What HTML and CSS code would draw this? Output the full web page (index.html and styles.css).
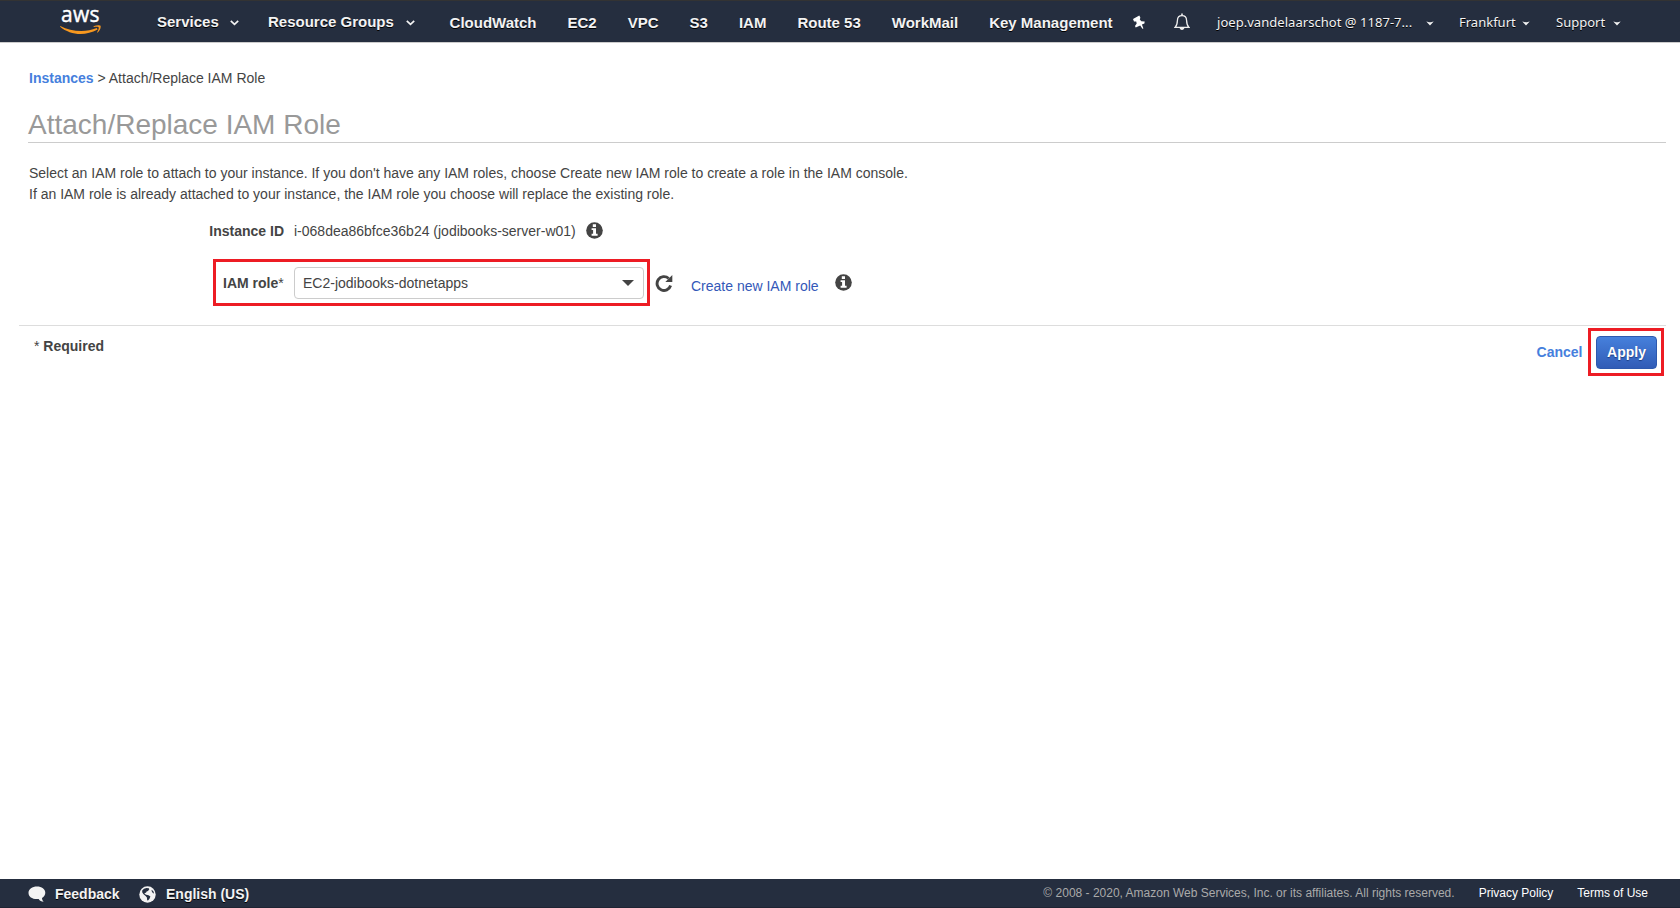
FILE: index.html
```html
<!DOCTYPE html>
<html lang="en">
<head>
<meta charset="utf-8">
<title>Attach/Replace IAM Role</title>
<link rel="stylesheet" href="styles.css">
</head>
<body>
<svg class="defs" width="0" height="0">
  <symbol id="caret" viewBox="0 0 9 6"><path d="M.8.8 4.5 4.4 8.200.8" fill="none" stroke="currentColor" stroke-width="1.700"/></symbol>
  <symbol id="tri" viewBox="0 0 8 5"><path d="M.3.400C2 .4 2.500 1.200 4 1.200S6 .4 7.700.4L4 4.600z" fill="currentColor"/></symbol>
  <symbol id="info" viewBox="0 0 17 17"><circle cx="8.500" cy="8.500" r="8.300" fill="#444"/><path d="M6.800 2.300h3.200v2.700h-3.200zM5.600 6.300h4.400v5.500h1.600v1.900H5.600v-1.900h1.500V8.100H5.600z" fill="#fff"/></symbol>
</svg>
<header class="topbar">
  <a class="logo">
    <span class="logo-text">aws</span>
    <svg class="smile" viewBox="0 0 42 10" width="42" height="10"><path d="M.3.900C11 6.500 25 8 36.800 3L37.600 4.500C25 11.500 10 10 .1 1.700z" fill="#f7981f"/><path d="M33.500 1.300C36 .2 39.800-.1 40.500.8 41.200 2 39.900 5.800 37.700 7.600 37.100 7.900 37 7.500 37.200 7 38 5.200 39.200 3.100 38.600 2.300 38 1.500 35.600 1.800 33.800 2z" fill="#f7981f"/></svg>
  </a>
  <nav class="menus">
    <a class="menu services">Services<svg class="caret"><use href="#caret"/></svg></a>
    <a class="menu groups">Resource Groups<svg class="caret"><use href="#caret"/></svg></a>
  </nav>
  <nav class="shortcuts">
    <a>CloudWatch</a><a>EC2</a><a>VPC</a><a>S3</a><a>IAM</a><a>Route 53</a><a>WorkMail</a><a>Key Management</a>
  </nav>
  <svg class="pin" viewBox="0 0 14 15" width="14" height="15"><path d="M1 4 7.300.4 8.400 2.800 7.800 4.600 9.300 6.200 12.700 6.600 12.400 8.400 9.900 9.600 11.400 13.400 10.400 13.700 8.200 10.600 3.700 12.600 3 11 4.700 8.500 4.200 6.600 2 6.500z" fill="#fff"/></svg>
  <svg class="bell" viewBox="0 0 16 18" width="16" height="18"><path d="M1.200 14.300C3 12.500 3.300 10.500 3.400 7.500 3.500 4.300 5.200 2.700 8 2.700s4.500 1.600 4.600 4.800C12.700 10.500 13 12.500 14.800 14.300z" fill="none" stroke="#eee" stroke-width="1.300"/><path d="M7.200.6h1.600v2H7.200zM5.500 14.600h5c-.2 1.500-1.100 2.400-2.500 2.400s-2.300-.9-2.500-2.400z" fill="#eee"/></svg>
  <div class="account">
    <a class="user"><span>joep.vandelaarschot @ 1187-7...</span><svg class="tri"><use href="#tri"/></svg></a>
    <a class="region"><span>Frankfurt</span><svg class="tri"><use href="#tri"/></svg></a>
    <a class="support"><span>Support</span><svg class="tri"><use href="#tri"/></svg></a>
  </div>
</header>
<main>
  <div class="crumbs"><a>Instances</a> &gt; Attach/Replace IAM Role</div>
  <h1>Attach/Replace IAM Role</h1>
  <p class="intro">Select an IAM role to attach to your instance. If you don't have any IAM roles, choose Create new IAM role to create a role in the IAM console.<br>If an IAM role is already attached to your instance, the IAM role you choose will replace the existing role.</p>
  <div class="row instance">
    <b class="label">Instance ID</b>
    <span class="value">i-068dea86bfce36b24 (jodibooks-server-w01)</span>
    <svg class="info"><use href="#info"/></svg>
  </div>
  <div class="row role">
    <div class="highlight field">
      <label><b>IAM role</b>*</label>
      <div class="select"><span>EC2-jodibooks-dotnetapps</span><i class="arrow"></i></div>
    </div>
    <svg class="refresh" viewBox="0 0 18 18" width="18" height="18"><path d="M13.700 4.500A6.900 6.900 0 1 0 15.600 11.500" fill="none" stroke="#444" stroke-width="2.900"/><path d="M17.300 1v7h-7z" fill="#444"/></svg>
    <a class="create">Create new IAM role</a>
    <svg class="info"><use href="#info"/></svg>
  </div>
  <div class="actions">
    <div class="required">* <b>Required</b></div>
    <a class="cancel">Cancel</a>
    <div class="highlight apply-box"><button class="apply">Apply</button></div>
  </div>
</main>
<footer>
  <svg class="bubble" viewBox="0 0 18 17" width="18" height="17"><path d="M9 .5c4.700 0 8.300 2.600 8.300 6.300 0 2.200-1.300 4.200-3.300 5.300 0 1.500.6 2.700 1.700 3.700-2.300 0-4-1-5-2.800C5 13.700.5 11.300.5 6.800.5 3.100 4.300.5 9 .5z" fill="#f3f3f3"/></svg>
  <a class="feedback">Feedback</a>
  <svg class="globe" viewBox="0 0 17 17" width="17" height="17"><circle cx="8.500" cy="8.500" r="8.200" fill="#f3f3f3"/><path d="M3.200 4.500 5 2.800 7.500 1.900 9.800 2.300 10.300 3.300 9 5 7.600 5.500 7 6.800 5.600 6.900 5.800 8 7.200 8.700 9.600 9.200 11.400 10.400 10.500 12.700 9 14.600 8.200 14.200 7.900 11.600 6.600 10 4.300 8 3.200 6.300zM12.700 3.700l1.800 1.800.5 2-1.200-.4L12.600 5z" fill="#252e3f"/></svg>
  <a class="language">English (US)</a>
  <span class="copyright">© 2008 - 2020, Amazon Web Services, Inc. or its affiliates. All rights reserved.</span>
  <a class="privacy">Privacy Policy</a>
  <a class="terms">Terms of Use</a>
</footer>
</body>
</html>
```

FILE: styles.css
```css
* { box-sizing: border-box; }
body {
  margin: 0;
  height: 908px;
  display: flex;
  flex-direction: column;
  overflow: hidden;
  background: #fff;
  color: #444;
  font: 14px/20px "Liberation Sans", Arial, sans-serif;
  white-space: nowrap;
}
svg { display: block; flex: none; }
.defs { position: absolute; }
.topbar {
  display: flex;
  flex: none;
  height: 43px;
  background: #252e3f;
  border-top: 1px solid #333;
  border-bottom: 1px solid #ccc;
  color: #f3f3f3;
  font-weight: bold;
  font-size: 15px;
  text-shadow: 0 1px 0 #000;
}
.logo { width: 97px; margin-left: 60px; padding-top: 3px; text-shadow: none; }
.logo-text {
  display: block;
  height: 21px;
  padding-left: 1px;
  color: #fff;
  font: 500 21px/21px "Open Sans", sans-serif;
  letter-spacing: .3px;
  -webkit-text-stroke: .4px #fff;
}
.smile { height: 10px; }
.menus { display: flex; width: 292px; padding-top: 11px; }
.menu { display: flex; }
.services { width: 111px; }
.caret { width: 9px; height: 6px; margin: 8px 0 0 11px; }
.groups .caret { margin-left: 12px; }
.shortcuts { display: flex; gap: 31px; width: 689px; padding: 12px 0 0 .6px; }
.pin { margin: 14px 0 0 -6px; }
.bell { margin: 12px 0 0 28px; }
.account {
  display: flex;
  padding-top: 11px;
  font: 13px/20px "Noto Sans", sans-serif;
}
.account a { display: flex; justify-content: space-between; }
.user { width: 217px; margin-left: 27px; letter-spacing: .04px; }
.region { width: 71px; margin-left: 25px; }
.support { width: 65px; margin-left: 26px; }
.tri { width: 8px; height: 5px; margin-top: 9px; }
main { flex: 1; padding: 25px 14px 0 28px; }
.crumbs { padding-left: 1px; }
.crumbs a, .cancel { color: #467fdd; font-weight: bold; }
h1 {
  height: 35px;
  margin: 20px 0 0;
  border-bottom: 1px solid #ccc;
  color: #999;
  font-size: 28px;
  font-weight: normal;
  line-height: 33px;
}
.intro { margin: 20px 0 0 1px; line-height: 21px; }
.row { display: flex; }
.instance { margin-top: 16px; height: 38px; }
.label { width: 266px; padding-right: 10px; text-align: right; }
.info { width: 17px; height: 17px; margin: 1px 0 0 10px; }
.highlight { border: 3px solid #ed1c24; }
.role { height: 66px; padding-left: 185px; }
.field { display: flex; width: 437px; height: 47px; padding: 5px 3px 0 7px; }
.field label { width: 71px; line-height: 32px; }
.select {
  display: flex;
  flex: 1;
  height: 32px;
  align-items: center;
  justify-content: space-between;
  padding: 0 9px 0 8px;
  border: 1px solid #ccc;
  border-radius: 4px;
}
.arrow { border: 6px solid transparent; border-top-color: #444; border-bottom: 0; }
.refresh { margin: 15px 0 0 5px; }
.create { width: 134px; margin: 17px 0 0 18px; color: #3358b8; }
.role .info { margin: 15px 0 0 9.500px; }
.actions {
  display: flex;
  margin-left: -9px;
  border-top: 1px solid #ddd;
}
.required { flex: 1; padding: 10px 0 0 15px; }
.cancel { padding-top: 16px; margin-right: 5.500px; }
.apply-box { width: 76px; height: 48px; margin: 2px 2px 0 0; padding: 5px 4px 0 5px; }
.apply {
  display: block;
  width: 61px;
  height: 33px;
  padding: 0 0 2px;
  border: 1px solid #2d59ae;
  border-radius: 4px;
  background: linear-gradient(#4680dc, #315cb6);
  color: #fff;
  font: bold 14px/28px "Liberation Sans", Arial, sans-serif;
  text-shadow: 0 1px 1px #1c3d80;
}
footer {
  display: flex;
  flex: none;
  height: 29px;
  padding: 5px 32px 0 27px;
  background: #252e3f;
  border-bottom: 1px solid #1f2433;
  color: #f3f3f3;
  font-weight: bold;
  text-shadow: 0 1px 0 #000;
}
.bubble { margin: 1.500px 9px 0 1px; }
.feedback { width: 84px; }
.globe { margin: 1.500px 10px 0 0; }
.copyright, .privacy, .terms { font: 12px/18px "Liberation Sans", Arial, sans-serif; text-shadow: none; }
.copyright { margin-left: auto; color: #aaa; }
.privacy { margin-left: 24px; color: #fff; }
.terms { margin-left: 24px; color: #fff; }
```
